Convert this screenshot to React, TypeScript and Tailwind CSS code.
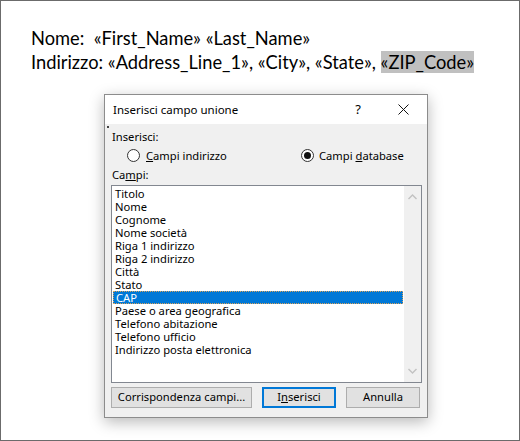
const ui = { fontFamily: '"Noto Sans", "Open Sans", sans-serif' }
const doc = { fontFamily: 'Lato, "Open Sans", sans-serif' }

const fields = [
  "Titolo",
  "Nome",
  "Cognome",
  "Nome società",
  "Riga 1 indirizzo",
  "Riga 2 indirizzo",
  "Città",
  "Stato",
  "CAP",
  "Paese o area geografica",
  "Telefono abitazione",
  "Telefono ufficio",
  "Indirizzo posta elettronica",
]

const Radio: React.FC<{ checked?: boolean }> = ({ checked }) => (
  <span className="flex h-[13px] w-[13px] items-center justify-center rounded-full border border-[#333] bg-white">
    {checked ? <span className="h-[7px] w-[7px] rounded-full bg-[#111]" /> : null}
  </span>
)

const Chevron: React.FC<{ up?: boolean }> = ({ up }) => (
  <svg width="9" height="6" viewBox="0 0 9 6" className="block">
    <path d={up ? "M0.5 5 L4.5 1 L8.5 5" : "M0.5 1 L4.5 5 L8.5 1"} fill="none" stroke="#c2c2c2" strokeWidth="1.4" />
  </svg>
)

const Button: React.FC<{ w: string; focused?: boolean; children: React.ReactNode }> = ({ w, focused, children }) => (
  <div
    className={`flex h-[21px] items-center justify-center bg-[#e1e1e1] text-black ${w} ${
      focused ? "border-2 border-[#0078d7]" : "border border-[#adadad]"
    }`}
  >
    {children}
  </div>
)

export default function App() {
  return (
    <div className="flex h-[441px] w-[520px] flex-col border border-[#6b6b6b] bg-white">
      <div className="pl-[30px] pt-[25px] text-[18.3px] leading-[24px] text-black" style={doc}>
        <div>Nome:&nbsp; «First_Name» «Last_Name»</div>
        <div>
          Indirizzo: «Address_Line_1», «City», «State», <span className="bg-[#c0c0c0]">«ZIP_Code»</span>
        </div>
      </div>

      <div
        className="ml-[103px] mt-[20px] flex h-[324px] w-[324px] flex-col border border-[#8c8c8c] bg-[#f0f0f0] shadow-[0_4px_14px_rgba(0,0,0,0.28)]"
        style={ui}
      >
        <div className="flex h-[29px] items-center bg-white text-[11.5px] text-black">
          <span className="pl-[8px]">Inserisci campo unione</span>
          <span className="ml-auto mr-[37px] text-[13px]">?</span>
          <svg width="11" height="11" viewBox="0 0 11 11" className="mr-[18px]">
            <path d="M0.5 0.5 L10.5 10.5 M10.5 0.5 L0.5 10.5" stroke="#111" strokeWidth="1" />
          </svg>
        </div>

        <div className="flex flex-1 flex-col px-[6px] text-[11.2px] text-black">
          <div className="relative h-[6px]">
            <span className="absolute left-[-4px] top-[2px] h-[2px] w-[2px] bg-[#444]" />
          </div>
          <div className="flex h-[14px] items-center pl-[1px]">Inserisci:</div>
          <div className="flex h-[24px] items-center">
            <div className="ml-[16px] flex w-[174px] items-center gap-[6px]">
              <Radio />
              <span>
                <u>C</u>ampi indirizzo
              </span>
            </div>
            <div className="flex items-center gap-[5px]">
              <Radio checked />
              <span>
                Campi <u>d</u>atabase
              </span>
            </div>
          </div>
          <div className="flex h-[14px] items-center pl-[1px]">
            <span>
              Ca<u>m</u>pi:
            </span>
          </div>

          <div className="mt-[3px] flex h-[198px] w-[311px] border border-[#828790] bg-white">
            <div className="flex-1 pt-[1px]">
              {fields.map((f) =>
                f === "CAP" ? (
                  <div
                    key={f}
                    className="mx-[1px] h-[13px] border border-dotted border-[#d9a25a] bg-[#0078d7] pl-[2px] leading-[11px] text-white"
                  >
                    {f}
                  </div>
                ) : (
                  <div key={f} className="h-[13px] pl-[3px] leading-[13px]">
                    {f}
                  </div>
                ),
              )}
            </div>
            <div className="flex w-[17px] flex-col items-center justify-between bg-[#f0f0f0] py-[8px]">
              <Chevron up />
              <Chevron />
            </div>
          </div>

          <div className="mt-[4px] flex">
            <Button w="w-[141px]">
              <span>
                Corrispondenza campi...
              </span>
            </Button>
            <div className="ml-[10px]">
              <Button w="w-[74px]" focused>
                <span>
                  I<u>n</u>serisci
                </span>
              </Button>
            </div>
            <div className="ml-[10px]">
              <Button w="w-[74px]">Annulla</Button>
            </div>
          </div>
        </div>
      </div>
    </div>
  )
}
